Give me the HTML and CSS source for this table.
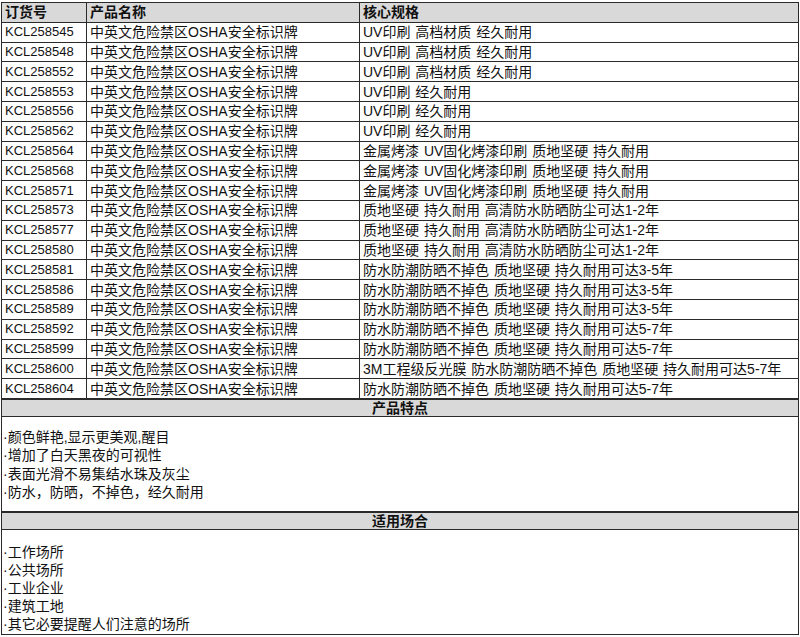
FILE: index.html
```html
<!DOCTYPE html>
<html lang="zh">
<head>
<meta charset="utf-8">
<title>中英文危险禁区OSHA安全标识牌</title>
<link rel="stylesheet" href="styles.css">
</head>
<body>
<table class="spec">
  <colgroup>
    <col class="c1"><col class="c2"><col class="c3">
  </colgroup>
  <thead>
    <tr class="head"><th>订货号</th><th>产品名称</th><th>核心规格</th></tr>
  </thead>
  <tbody>
    <tr><td class="code">KCL258545</td><td>中英文危险禁区OSHA安全标识牌</td><td class="spec-text">UV印刷 高档材质 经久耐用</td></tr>
    <tr><td class="code">KCL258548</td><td>中英文危险禁区OSHA安全标识牌</td><td class="spec-text">UV印刷 高档材质 经久耐用</td></tr>
    <tr><td class="code">KCL258552</td><td>中英文危险禁区OSHA安全标识牌</td><td class="spec-text">UV印刷 高档材质 经久耐用</td></tr>
    <tr><td class="code">KCL258553</td><td>中英文危险禁区OSHA安全标识牌</td><td class="spec-text">UV印刷 经久耐用</td></tr>
    <tr><td class="code">KCL258556</td><td>中英文危险禁区OSHA安全标识牌</td><td class="spec-text">UV印刷 经久耐用</td></tr>
    <tr><td class="code">KCL258562</td><td>中英文危险禁区OSHA安全标识牌</td><td class="spec-text">UV印刷 经久耐用</td></tr>
    <tr><td class="code">KCL258564</td><td>中英文危险禁区OSHA安全标识牌</td><td class="spec-text">金属烤漆 UV固化烤漆印刷 质地坚硬 持久耐用</td></tr>
    <tr><td class="code">KCL258568</td><td>中英文危险禁区OSHA安全标识牌</td><td class="spec-text">金属烤漆 UV固化烤漆印刷 质地坚硬 持久耐用</td></tr>
    <tr><td class="code">KCL258571</td><td>中英文危险禁区OSHA安全标识牌</td><td class="spec-text">金属烤漆 UV固化烤漆印刷 质地坚硬 持久耐用</td></tr>
    <tr><td class="code">KCL258573</td><td>中英文危险禁区OSHA安全标识牌</td><td class="spec-text">质地坚硬 持久耐用 高清防水防晒防尘可达1-2年</td></tr>
    <tr><td class="code">KCL258577</td><td>中英文危险禁区OSHA安全标识牌</td><td class="spec-text">质地坚硬 持久耐用 高清防水防晒防尘可达1-2年</td></tr>
    <tr><td class="code">KCL258580</td><td>中英文危险禁区OSHA安全标识牌</td><td class="spec-text">质地坚硬 持久耐用 高清防水防晒防尘可达1-2年</td></tr>
    <tr><td class="code">KCL258581</td><td>中英文危险禁区OSHA安全标识牌</td><td class="spec-text">防水防潮防晒不掉色 质地坚硬 持久耐用可达3-5年</td></tr>
    <tr><td class="code">KCL258586</td><td>中英文危险禁区OSHA安全标识牌</td><td class="spec-text">防水防潮防晒不掉色 质地坚硬 持久耐用可达3-5年</td></tr>
    <tr><td class="code">KCL258589</td><td>中英文危险禁区OSHA安全标识牌</td><td class="spec-text">防水防潮防晒不掉色 质地坚硬 持久耐用可达3-5年</td></tr>
    <tr><td class="code">KCL258592</td><td>中英文危险禁区OSHA安全标识牌</td><td class="spec-text">防水防潮防晒不掉色 质地坚硬 持久耐用可达5-7年</td></tr>
    <tr><td class="code">KCL258599</td><td>中英文危险禁区OSHA安全标识牌</td><td class="spec-text">防水防潮防晒不掉色 质地坚硬 持久耐用可达5-7年</td></tr>
    <tr><td class="code">KCL258600</td><td>中英文危险禁区OSHA安全标识牌</td><td class="spec-text">3M工程级反光膜 防水防潮防晒不掉色 质地坚硬 持久耐用可达5-7年</td></tr>
    <tr><td class="code">KCL258604</td><td>中英文危险禁区OSHA安全标识牌</td><td class="spec-text">防水防潮防晒不掉色 质地坚硬 持久耐用可达5-7年</td></tr>
    <tr class="section"><th colspan="3">产品特点</th></tr>
    <tr class="block block1"><td colspan="3">
      <p>·颜色鲜艳,显示更美观,醒目</p>
      <p>·增加了白天黑夜的可视性</p>
      <p>·表面光滑不易集结水珠及灰尘</p>
      <p>·防水，防晒，不掉色，经久耐用</p>
    </td></tr>
    <tr class="section"><th colspan="3">适用场合</th></tr>
    <tr class="block block2"><td colspan="3">
      <p>·工作场所</p>
      <p>·公共场所</p>
      <p>·工业企业</p>
      <p>·建筑工地</p>
      <p>·其它必要提醒人们注意的场所</p>
    </td></tr>
  </tbody>
</table>
</body>
</html>
```
FILE: styles.css
```css
html, body {
  margin: 0;
  padding: 0;
  background: #ffffff;
}
body {
  padding: 2px 0 0 1px;
  font-family: "Liberation Sans", "Noto Sans CJK SC", sans-serif;
  font-size: 14px;
  color: #111;
}
.spec {
  border-collapse: collapse;
  table-layout: fixed;
  width: 797px;
}
.c1 { width: 85px; }
.c2 { width: 273px; }
.c3 { width: 439px; }
.spec th,
.spec td {
  border: 1px solid #2a2a2a;
  padding: 0 3px;
  height: 18.8px;
  line-height: 18px;
  text-align: left;
  white-space: nowrap;
  overflow: hidden;
  vertical-align: middle;
}
.spec td.code {
  font-size: 13px;
}
.spec td.spec-text {
  word-spacing: 1px;
}
.spec .head th {
  background: #d9d9d9;
  font-weight: bold;
}
.spec .section th {
  background: #d9d9d9;
  text-align: center;
  font-weight: bold;
  height: 16px;
  line-height: 16px;
  border-top: 2px solid #2a2a2a;
}
.spec .block td {
  height: auto;
  vertical-align: top;
  padding: 11px 1px 9px;
}
.block p {
  margin: 0;
  line-height: 18.5px;
}
.spec .block2 td {
  padding: 13px 1px 1px;
}
.block2 p {
  line-height: 18px;
}
```
